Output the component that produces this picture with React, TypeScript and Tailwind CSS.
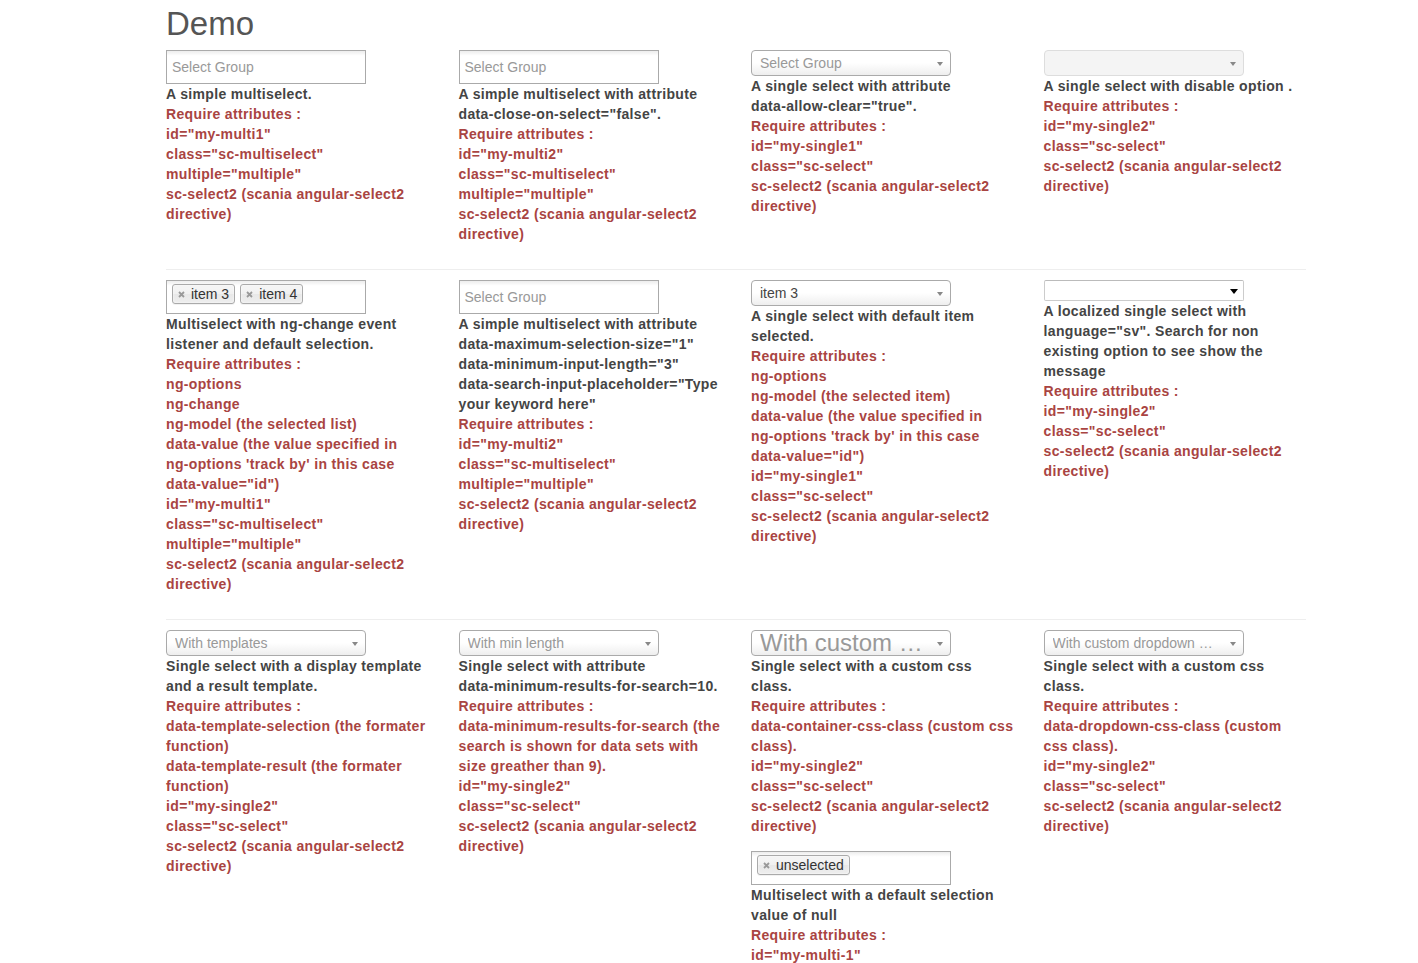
import React from "react";

type Control =
  | { kind: "multi"; placeholder?: string; chips?: string[] }
  | { kind: "single"; text: string; muted?: boolean; big?: boolean }
  | { kind: "disabled" }
  | { kind: "native" };

type Block = { control: Control; dark: string[]; red: string[] };

type Cell = Block[];

const directive = ["sc-select2 (scania angular-select2", "directive)"];

const rows: Cell[][] = [
  [
    [
      {
        control: { kind: "multi", placeholder: "Select Group" },
        dark: ["A simple multiselect."],
        red: ["Require attributes :", 'id="my-multi1"', 'class="sc-multiselect"', 'multiple="multiple"', ...directive],
      },
    ],
    [
      {
        control: { kind: "multi", placeholder: "Select Group" },
        dark: ["A simple multiselect with attribute", 'data-close-on-select="false".'],
        red: ["Require attributes :", 'id="my-multi2"', 'class="sc-multiselect"', 'multiple="multiple"', ...directive],
      },
    ],
    [
      {
        control: { kind: "single", text: "Select Group", muted: true },
        dark: ["A single select with attribute", 'data-allow-clear="true".'],
        red: ["Require attributes :", 'id="my-single1"', 'class="sc-select"', ...directive],
      },
    ],
    [
      {
        control: { kind: "disabled" },
        dark: ["A single select with disable option ."],
        red: ["Require attributes :", 'id="my-single2"', 'class="sc-select"', ...directive],
      },
    ],
  ],
  [
    [
      {
        control: { kind: "multi", chips: ["item 3", "item 4"] },
        dark: ["Multiselect with ng-change event", "listener and default selection."],
        red: [
          "Require attributes :",
          "ng-options",
          "ng-change",
          "ng-model (the selected list)",
          "data-value (the value specified in",
          "ng-options 'track by' in this case",
          'data-value="id")',
          'id="my-multi1"',
          'class="sc-multiselect"',
          'multiple="multiple"',
          ...directive,
        ],
      },
    ],
    [
      {
        control: { kind: "multi", placeholder: "Select Group" },
        dark: [
          "A simple multiselect with attribute",
          'data-maximum-selection-size="1"',
          'data-minimum-input-length="3"',
          'data-search-input-placeholder="Type',
          'your keyword here"',
        ],
        red: ["Require attributes :", 'id="my-multi2"', 'class="sc-multiselect"', 'multiple="multiple"', ...directive],
      },
    ],
    [
      {
        control: { kind: "single", text: "item 3" },
        dark: ["A single select with default item", "selected."],
        red: [
          "Require attributes :",
          "ng-options",
          "ng-model (the selected item)",
          "data-value (the value specified in",
          "ng-options 'track by' in this case",
          'data-value="id")',
          'id="my-single1"',
          'class="sc-select"',
          ...directive,
        ],
      },
    ],
    [
      {
        control: { kind: "native" },
        dark: [
          "A localized single select with",
          'language="sv". Search for non',
          "existing option to see show the",
          "message",
        ],
        red: ["Require attributes :", 'id="my-single2"', 'class="sc-select"', ...directive],
      },
    ],
  ],
  [
    [
      {
        control: { kind: "single", text: "With templates", muted: true },
        dark: ["Single select with a display template", "and a result template."],
        red: [
          "Require attributes :",
          "data-template-selection (the formater",
          "function)",
          "data-template-result (the formater",
          "function)",
          'id="my-single2"',
          'class="sc-select"',
          ...directive,
        ],
      },
    ],
    [
      {
        control: { kind: "single", text: "With min length", muted: true },
        dark: ["Single select with attribute", "data-minimum-results-for-search=10."],
        red: [
          "Require attributes :",
          "data-minimum-results-for-search (the",
          "search is shown for data sets with",
          "size greather than 9).",
          'id="my-single2"',
          'class="sc-select"',
          ...directive,
        ],
      },
    ],
    [
      {
        control: { kind: "single", text: "With custom …", muted: true, big: true },
        dark: ["Single select with a custom css", "class."],
        red: [
          "Require attributes :",
          "data-container-css-class (custom css",
          "class).",
          'id="my-single2"',
          'class="sc-select"',
          ...directive,
        ],
      },
      {
        control: { kind: "multi", chips: ["unselected"] },
        dark: ["Multiselect with a default selection", "value of null"],
        red: ["Require attributes :", 'id="my-multi-1"', 'class="sc-multiselect"', 'multiple="multiple"', ...directive],
      },
    ],
    [
      {
        control: { kind: "single", text: "With custom dropdown …", muted: true },
        dark: ["Single select with a custom css", "class."],
        red: [
          "Require attributes :",
          "data-dropdown-css-class (custom",
          "css class).",
          'id="my-single2"',
          'class="sc-select"',
          ...directive,
        ],
      },
    ],
  ],
];

function Arrow({ dark }: { dark?: boolean }) {
  if (dark) {
    return (
      <span className="absolute right-[5px] top-[8px] w-0 h-0 border-l-[4px] border-r-[4px] border-t-[5px] border-l-transparent border-r-transparent border-t-black" />
    );
  }
  return (
    <span className="absolute right-[7px] top-[11px] w-0 h-0 border-l-[3.5px] border-r-[3.5px] border-t-[4px] border-l-transparent border-r-transparent border-t-[#888]" />
  );
}

function Chip({ label }: { label: string }) {
  return (
    <div className="relative h-[20px] flex items-center pl-[18px] pr-[5px] border border-[#aaa] rounded-[3px] bg-[linear-gradient(to_bottom,#f4f4f4_20%,#f0f0f0_50%,#e8e8e8_52%,#eeeeee_100%)] text-[14px] leading-[13px] text-[#333] shadow-[0_0_2px_#fff_inset,0_1px_0_rgba(0,0,0,0.05)]">
      <svg width="7" height="7" viewBox="0 0 7 7" className="absolute left-[5px] top-[6px]">
        <path d="M1 1L6 6M6 1L1 6" stroke="#999" strokeWidth="1.8" />
      </svg>
      {label}
    </div>
  );
}

function ControlView({ c }: { c: Control }) {
  if (c.kind === "multi") {
    if (c.chips) {
      return (
        <div className="h-[34px] w-[200px] border border-[#aaa] bg-[linear-gradient(to_bottom,#eeeeee_1%,#ffffff_15%)] flex items-start gap-[5px] pl-[5px] pt-[3px]">
          {c.chips.map((chip) => (
            <Chip key={chip} label={chip} />
          ))}
        </div>
      );
    }
    return (
      <div className="h-[34px] w-[200px] border border-[#aaa] bg-[linear-gradient(to_bottom,#eeeeee_1%,#ffffff_15%)] flex items-center pl-[5px]">
        <span className="text-[14px] text-[#999]">{c.placeholder}</span>
      </div>
    );
  }
  if (c.kind === "single") {
    return (
      <div className="relative h-[26px] w-[200px] border border-[#aaa] rounded-[4px] bg-[linear-gradient(to_top,#eeeeee_0%,#ffffff_50%)] pl-[8px] pr-[24px] overflow-hidden">
        <div
          className={
            c.big
              ? "text-[24px] leading-[24px] text-[#999] whitespace-nowrap overflow-hidden"
              : `text-[14px] leading-[25px] whitespace-nowrap overflow-hidden ${c.muted ? "text-[#999]" : "text-[#444]"}`
          }
        >
          {c.text}
        </div>
        <Arrow />
      </div>
    );
  }
  if (c.kind === "disabled") {
    return (
      <div className="relative h-[26px] w-[200px] border border-[#ddd] rounded-[4px] bg-[#f4f4f4]">
        <Arrow />
      </div>
    );
  }
  return (
    <div className="relative h-[21px] w-[200px] border border-[#ccc] border-t-[#bbb] rounded-[2px] bg-white">
      <Arrow dark />
    </div>
  );
}

function BlockView({ b }: { b: Block }) {
  return (
    <div>
      <ControlView c={b.control} />
      <div className="text-[14px] leading-[20px] font-bold tracking-[0.35px] whitespace-nowrap">
        {b.dark.map((l, i) => (
          <div key={"d" + i} className="text-[#444]">
            {l}
          </div>
        ))}
        {b.red.map((l, i) => (
          <div key={"r" + i} className="text-[#a94442]">
            {l}
          </div>
        ))}
      </div>
    </div>
  );
}

export default function App() {
  return (
    <div className="min-h-screen bg-white font-['Liberation_Sans',Arial,sans-serif]">
      <div className="ml-[151px] w-[1170px]">
        <h1 className="px-[15px] pt-[6px] pb-[8px] text-[33px] leading-[36px] font-normal text-[#555]">Demo</h1>
        {rows.map((row, ri) => (
          <div key={ri}>
            {ri > 0 && <hr className="mx-[15px] mt-[25px] mb-[10px] border-0 border-t border-[#eee]" />}
            <div className="grid grid-cols-4">
              {row.map((cell, ci) => (
                <div key={ci} className="px-[15px] flex flex-col gap-[15px]">
                  {cell.map((b, bi) => (
                    <BlockView key={bi} b={b} />
                  ))}
                </div>
              ))}
            </div>
          </div>
        ))}
      </div>
    </div>
  );
}
